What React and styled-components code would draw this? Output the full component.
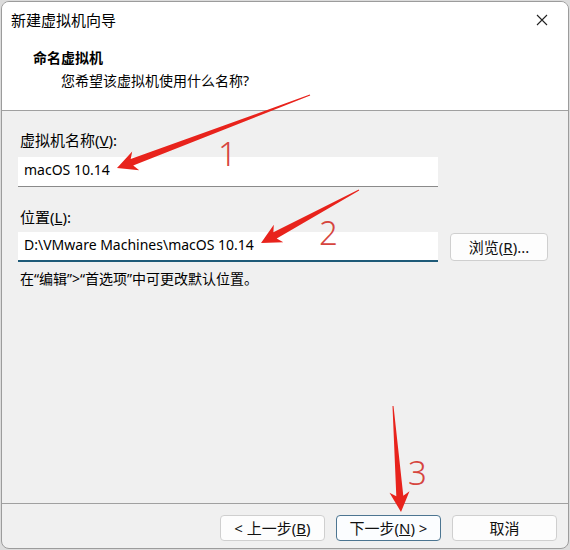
import React from "react";
import styled, { createGlobalStyle } from "styled-components";

const Global = createGlobalStyle`
  html, body { margin: 0; padding: 0; background: #dcdcdc; }
  body {
    font-family: "Noto Sans", "Noto Sans CJK SC", sans-serif;
    color: #000;
  }
`;

const Window = styled.div`
  position: relative;
  box-sizing: border-box;
  margin: 1px;
  width: 568px;
  height: 548px;
  border: 1px solid #9c9c9c;
  border-radius: 8px;
  overflow: hidden;
  display: flex;
  flex-direction: column;
  background: #f0f0f0;
`;

const TitleBar = styled.div`
  height: 35px;
  background: #fff;
  display: flex;
  align-items: center;
  justify-content: space-between;
  padding: 0 0 0 9px;
  font-size: 15px;
  line-height: 20px;
`;

const CloseBox = styled.div`
  width: 40px;
  height: 35px;
  display: flex;
  align-items: center;
  justify-content: center;
  margin-right: 6px;
`;

const Header = styled.div`
  background: #fff;
  border-bottom: 1px solid #a0a0a0;
  display: flex;
  flex-direction: column;
  padding: 11px 0 0 31px;
  box-sizing: border-box;
  height: 74px;
`;

const HeaderTitle = styled.div`
  font-size: 14px;
  font-weight: 700;
  line-height: 20px;
`;

const HeaderSub = styled.div`
  font-size: 14px;
  line-height: 20px;
  margin: 3px 0 0 28px;
`;

const Body = styled.div`
  flex: 1;
  padding: 19px 0 0 16px;
  display: flex;
  flex-direction: column;
`;

const Label = styled.div`
  font-size: 15px;
  line-height: 20px;
  margin-left: 2px;
  margin-top: ${(p) => p.$top || 0}px;
`;

const Row = styled.div`
  display: flex;
  align-items: center;
  gap: 12px;
  margin-top: ${(p) => p.$top || 0}px;
`;

const TextInput = styled.input`
  box-sizing: border-box;
  width: 420px;
  height: 30px;
  border: none;
  border-bottom: ${(p) => (p.$focused ? "2px solid #1e5a78" : "1px solid #8a8a8a")};
  background: #fff;
  padding: 0 6px 4px;
  font-family: "Noto Sans", "Noto Sans CJK SC", sans-serif;
  font-size: 14px;
  color: #000;
  outline: none;
  margin: 0;
`;

const Button = styled.button`
  box-sizing: border-box;
  width: ${(p) => p.$w || 105}px;
  height: ${(p) => p.$h || 26}px;
  border: 1px solid ${(p) => (p.$focused ? "#4c7591" : "#cfcfcf")};
  border-radius: 4px;
  background: ${(p) => (p.$focused ? "#fbfdff" : "#fdfdfd")};
  font-family: "Noto Sans", "Noto Sans CJK SC", sans-serif;
  font-size: 15px;
  line-height: 18px;
  color: #111;
  padding: 0;
  display: flex;
  align-items: center;
  justify-content: center;
  margin: 0;
`;

const Note = styled.div`
  font-size: 14px;
  line-height: 20px;
  margin: 7px 0 0 2px;
`;

const Footer = styled.div`
  height: 45px;
  border-top: 1px solid #a0a0a0;
  display: flex;
  justify-content: flex-end;
  align-items: flex-start;
  gap: 11px;
  padding: 11px 11px 0 0;
  box-sizing: border-box;
`;

const Overlay = styled.svg`
  position: absolute;
  left: -2px;
  top: -2px;
  width: 570px;
  height: 550px;
  pointer-events: none;
`;

// Tapered arrow: thin tail widening to a neck, then a triangular head.
function arrowPoints(x1, y1, x2, y2, { tail = 1, neck = 7, head = 20, headLen = 20 } = {}) {
  const dx = x2 - x1;
  const dy = y2 - y1;
  const len = Math.hypot(dx, dy);
  const ux = dx / len;
  const uy = dy / len;
  const nx = -uy;
  const ny = ux;
  const bx = x2 - ux * headLen;
  const by = y2 - uy * headLen;
  const bx2 = x2 - ux * headLen * 0.8;
  const by2 = y2 - uy * headLen * 0.8;
  const pts = [
    [x1 + (nx * tail) / 2, y1 + (ny * tail) / 2],
    [bx2 + (nx * neck) / 2, by2 + (ny * neck) / 2],
    [bx + (nx * head) / 2, by + (ny * head) / 2],
    [x2, y2],
    [bx - (nx * head) / 2, by - (ny * head) / 2],
    [bx2 - (nx * neck) / 2, by2 - (ny * neck) / 2],
    [x1 - (nx * tail) / 2, y1 - (ny * tail) / 2],
  ];
  return pts.map((p) => p.map((v) => v.toFixed(1)).join(",")).join(" ");
}

const arrows = [
  { from: [310, 95], to: [117, 168], n: "1", nx: 218, ny: 166 },
  { from: [359, 190], to: [261, 243], n: "2", nx: 319, ny: 245 },
  { from: [393, 406], to: [401, 512], n: "3", nx: 408, ny: 485 },
];

export default function App() {
  return (
    <>
      <Global />
      <Window>
        <TitleBar>
          <span>新建虚拟机向导</span>
          <CloseBox>
            <svg width="12" height="12" viewBox="0 0 12 12">
              <path d="M1 1 L11 11 M11 1 L1 11" stroke="#222" strokeWidth="1.1" />
            </svg>
          </CloseBox>
        </TitleBar>
        <Header>
          <HeaderTitle>命名虚拟机</HeaderTitle>
          <HeaderSub>您希望该虚拟机使用什么名称?</HeaderSub>
        </Header>
        <Body>
          <Label>
            虚拟机名称(<u>V</u>):
          </Label>
          <Row $top={7}>
            <TextInput readOnly value="macOS 10.14" />
          </Row>
          <Label $top={20}>
            位置(<u>L</u>):
          </Label>
          <Row $top={5}>
            <TextInput $focused readOnly value="D:\VMware Machines\macOS 10.14" />
            <Button $w={98} $h={28}>
              浏览(<u>R</u>)...
            </Button>
          </Row>
          <Note>在“编辑”&gt;“首选项”中可更改默认位置。</Note>
        </Body>
        <Footer>
          <Button>
            &lt; 上一步(<u>B</u>)
          </Button>
          <Button $focused>
            下一步(<u>N</u>) &gt;
          </Button>
          <Button>取消</Button>
        </Footer>
        <Overlay viewBox="0 0 570 550">
          {arrows.map((a) => (
            <g key={a.n}>
              <polygon points={arrowPoints(a.from[0], a.from[1], a.to[0], a.to[1])} fill="#e8231c" />
              <text
                x={a.nx}
                y={a.ny}
                fill="#d6453e"
                fontSize="33"
                fontFamily="'Noto Sans', sans-serif"
                fontWeight="300"
              >
                {a.n}
              </text>
            </g>
          ))}
        </Overlay>
      </Window>
    </>
  );
}
